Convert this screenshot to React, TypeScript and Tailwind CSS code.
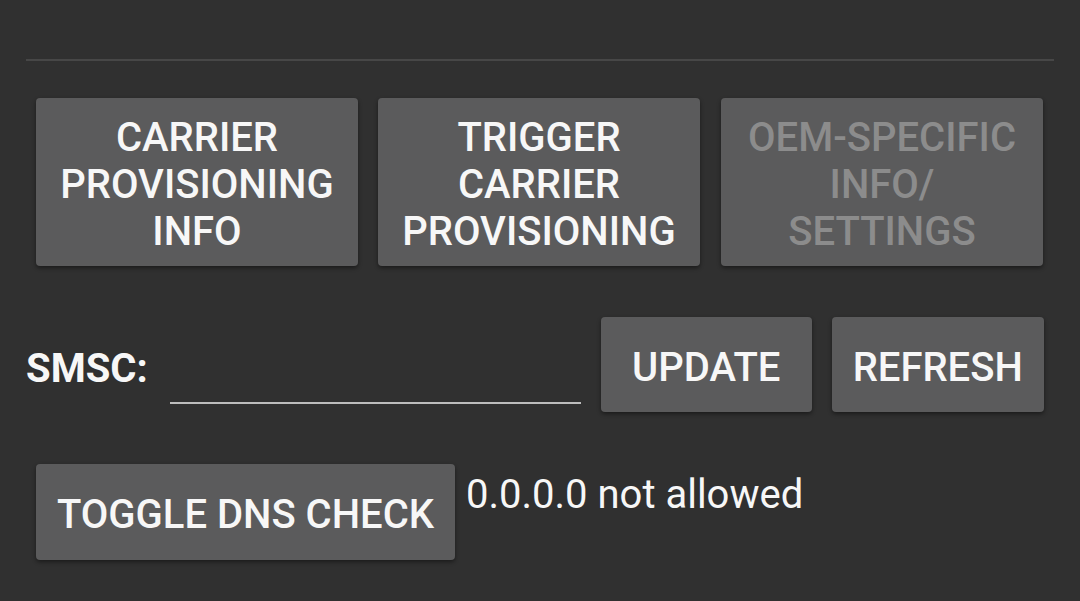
import React from "react";

const btn =
  "flex items-center justify-center rounded-[4px] bg-[#5b5b5c] shadow-[0_2px_4px_rgba(0,0,0,0.45)] text-center font-medium leading-[47px] text-[40px] pt-[5px]";

export default function App() {
  return (
    <div
      className="w-[1080px] h-[601px] overflow-hidden bg-[#303030] text-[#f7f7f7]"
      style={{ fontFamily: "Roboto, 'Noto Sans', sans-serif" }}
    >
      <div className="px-[26px] pt-[59px]">
        <div className="h-[2px] bg-[#474747]" />
      </div>

      <div className="flex gap-[20px] px-[36px] mt-[37px]">
        <div className={`${btn} w-[322px] h-[168px]`}>
          <span>
            CARRIER
            <br />
            PROVISIONING
            <br />
            INFO
          </span>
        </div>
        <div className={`${btn} w-[322px] h-[168px]`}>
          <span>
            TRIGGER
            <br />
            CARRIER
            <br />
            PROVISIONING
          </span>
        </div>
        <div className={`${btn} ml-[1px] w-[322px] h-[168px] text-[#8c8c8c]`}>
          <span>
            OEM-SPECIFIC
            <br />
            INFO/
            <br />
            SETTINGS
          </span>
        </div>
      </div>

      <div className="flex items-start mt-[51px] pl-[26px]">
        <div className="h-[95px] flex items-center pt-[8px] text-[40px] font-bold leading-[47px]">
          SMSC:
        </div>
        <div className="ml-[22px] w-[411px] h-[95px] flex flex-col justify-end pb-[8px]">
          <div className="h-[2px] bg-[#bdbdbd]" />
        </div>
        <div className={`${btn} ml-[20px] w-[211px] h-[95px]`}>UPDATE</div>
        <div className={`${btn} ml-[20px] w-[212px] h-[95px]`}>REFRESH</div>
      </div>

      <div className="flex items-start mt-[52px] pl-[36px]">
        <div className={`${btn} w-[419px] h-[96px]`}>TOGGLE DNS CHECK</div>
        <div className="ml-[11px] mt-[7px] text-[40px] leading-[47px] font-normal">
          0.0.0.0 not allowed
        </div>
      </div>
    </div>
  );
}
